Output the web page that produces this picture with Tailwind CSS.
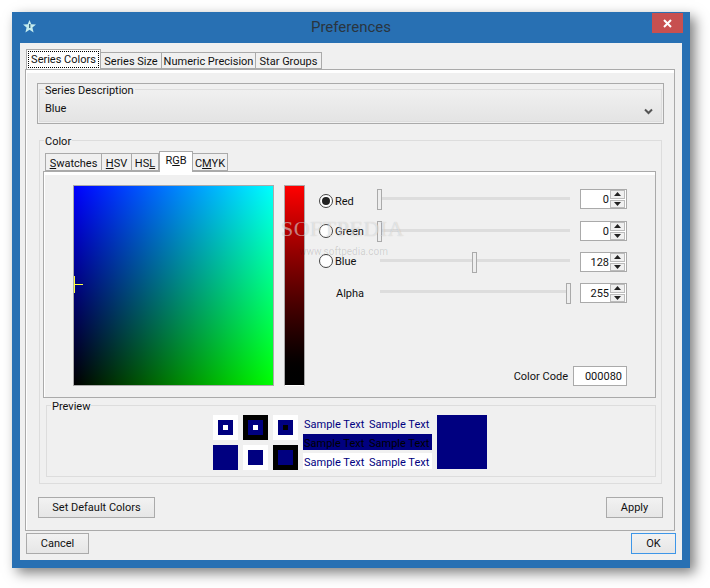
<!DOCTYPE html>
<html lang="en">
<head>
  <meta charset="utf-8">
  <title>Preferences</title>
  <script src="https://cdn.jsdelivr.net/npm/@tailwindcss/browser@4"></script>
</head>
<body class="bg-white h-[588px] pt-[12px] font-['Roboto',sans-serif] text-[11px] leading-none text-[#111] whitespace-nowrap">
  <!-- window -->
  <div class="relative ml-[12px] w-[678px] h-[556px] bg-[#2870b3] shadow-[5px_5px_12px_rgba(0,0,0,0.5)] flex flex-col">
    <!-- title bar -->
    <div class="relative h-[31px] flex items-center justify-center text-[15px] text-[#2a3540]">
      <svg class="absolute left-[10px] top-[7px] w-[15px] h-[15px]" viewBox="0 0 15 15"><path d="M7.5 1 9.3 5.3 14 5.6 10.4 8.6 11.6 13.4 7.5 10.8 3.4 13.4 4.6 8.6 1 5.6 5.7 5.3Z" fill="#c5ecee"/><path d="M7 5h1.4v4H7z" fill="#3b6d86"/></svg>
      <span>Preferences</span>
      <div class="absolute right-[7px] top-[1px] w-[31px] h-[20px] bg-[#c75050] flex items-center justify-center">
        <svg class="w-[9px] h-[9px]" viewBox="0 0 9 9"><path d="M1 1 8 8M8 1 1 8" stroke="#fff" stroke-width="2"/></svg>
      </div>
    </div>

    <!-- client -->
    <div class="mx-[8px] h-[517px] bg-[#f0f0f0] px-[5px] pt-[6px]">
      <!-- top tabs -->
      <div class="flex items-end h-[20px] pl-[1px]">
        <div class="relative z-10 -mb-[1px] h-[21px] w-[75px] bg-white border border-[#aaa] flex items-center justify-center"><span class="border border-dotted border-black h-[17px] w-[71px] flex items-center justify-center">Series Colors</span></div>
        <div class="h-[17px] w-[61px] bg-[#f0f0f0] border border-[#aaa] border-l-0 flex items-center justify-center"><span class="mt-[2px]">Series Size</span></div>
        <div class="h-[17px] w-[94px] bg-[#f0f0f0] border border-[#aaa] border-l-0 flex items-center justify-center"><span class="mt-[2px]">Numeric Precision</span></div>
        <div class="h-[17px] w-[66px] bg-[#f0f0f0] border border-[#aaa] border-l-0 flex items-center justify-center"><span class="mt-[2px]">Star Groups</span></div>
      </div>
      <!-- main pane -->
      <div class="h-[462px] w-[650px] border border-[#aaa] shadow-[inset_1px_3px_0_#fff] relative">
        <!-- series description -->
        <div class="relative ml-[11px] mt-[13px] w-[627px] h-[41px] border border-[#aaa] px-[1px] pt-[5px] pb-[1px]">
          <div class="h-[33px] border border-[#ddd] bg-gradient-to-b from-[#f0f0f0] to-[#e4e4e4] flex items-end justify-between pl-[5px] pr-[8px] pb-[7px]">
            <span>Blue</span>
            <svg class="w-[9px] h-[7px] mb-[-1px]" viewBox="0 0 9 7"><path d="M1 1.5 4.5 5 8 1.5" fill="none" stroke="#555" stroke-width="2"/></svg>
          </div>
          <span class="absolute left-[6px] top-[1px] bg-[#f0f0f0] px-[1px] h-[12px]">Series Description</span>
        </div>

        <!-- color group -->
        <div class="relative ml-[13px] mt-[16px] w-[623px] h-[344px] border border-[#ddd]">
          <span class="absolute left-[4px] top-[-5px] bg-[#f0f0f0] px-[1px] h-[13px]">Color</span>
          <div class="flex items-end h-[20px] mt-[10px] ml-[5px]">
            <div class="h-[18px] w-[57px] border border-[#aaa] flex items-center justify-center"><span class="mt-[3px]"><u>S</u>watches</span></div>
            <div class="h-[18px] w-[30px] border border-[#aaa] border-l-0 flex items-center justify-center"><span class="mt-[3px]"><u>H</u>SV</span></div>
            <div class="h-[18px] w-[27px] border border-[#aaa] border-l-0 flex items-center justify-center"><span class="mt-[3px]">HS<u>L</u></span></div>
            <div class="relative z-10 -mb-[1px] h-[21px] w-[34px] bg-white border border-[#aaa] border-b-0 flex items-center justify-center"><span class="mt-[-3px]">R<u>G</u>B</span></div>
            <div class="h-[18px] w-[35px] border border-[#aaa] border-l-0 flex items-center justify-center"><span class="mt-[3px]">C<u>M</u>YK</span></div>
          </div>
          <!-- rgb pane -->
          <div class="relative ml-[3px] w-[613px] h-[227px] border border-[#aaa] shadow-[inset_1px_3px_0_#fff] flex items-start pl-[29px] pt-[13px]">
            <div class="relative w-[201px] h-[201px] border border-[#aaa] bg-[linear-gradient(to_right,#000,#0f0),linear-gradient(to_bottom,#00f,#000)] bg-blend-screen">
              <div class="absolute left-0 top-[90px] w-[1px] h-[17px] bg-[#ffff40]"></div>
              <div class="absolute left-[1px] top-[98px] w-[8px] h-[1px] bg-[#ffff40]"></div>
            </div>
            <div class="ml-[10px] w-[21px] h-[201px] border border-[#aaa] border-b-white bg-gradient-to-b from-[#ff0000] to-black"></div>
            <!-- sliders -->
            <div class="ml-[13px] w-[309px] pt-[4px] flex flex-col">
              <div class="flex items-center h-[20px]">
                <div class="w-[14px] h-[14px] rounded-full border border-[#444] bg-white flex items-center justify-center mt-[4px] ml-[1px]"><div class="w-[8px] h-[8px] rounded-full bg-[#222]"></div></div>
                <span class="ml-[2px] w-[42px] mt-[4px]">Red</span>
                <div class="relative w-[193px] h-[20px]"><div class="absolute left-[3px] right-0 top-[8px] h-[3px] bg-[#ddd]"></div><div class="absolute left-0 top-0 w-[5px] h-[21px] bg-[#eee] border border-[#aaa]"></div></div>
                <div class="ml-[10px] w-[47px] h-[20px] border border-[#aaa] bg-white flex items-center"><span class="w-[28px] text-right">0</span><div class="ml-[1px] w-[15px] h-[18px] flex flex-col gap-[1px]"><div class="h-[8.5px] bg-[#f0f0f0] border border-[#bbb] flex items-center justify-center"><svg class="w-[7px] h-[4px]" viewBox="0 0 7 4"><path d="M3.5 0 7 4H0Z" fill="#222"/></svg></div><div class="h-[8.5px] bg-[#f0f0f0] border border-[#bbb] flex items-center justify-center"><svg class="w-[7px] h-[4px]" viewBox="0 0 7 4"><path d="M0 0H7L3.5 4Z" fill="#222"/></svg></div></div></div>
              </div>
              <div class="flex items-center h-[20px] mt-[12px]">
                <div class="w-[14px] h-[14px] rounded-full border border-[#444] bg-white ml-[1px] mt-[-1px]"></div>
                <span class="ml-[2px] w-[42px]">Green</span>
                <div class="relative w-[193px] h-[20px]"><div class="absolute left-[3px] right-0 top-[8px] h-[3px] bg-[#ddd]"></div><div class="absolute left-0 top-0 w-[5px] h-[21px] bg-[#eee] border border-[#aaa]"></div></div>
                <div class="ml-[10px] w-[47px] h-[20px] border border-[#aaa] bg-white flex items-center"><span class="w-[28px] text-right">0</span><div class="ml-[1px] w-[15px] h-[18px] flex flex-col gap-[1px]"><div class="h-[8.5px] bg-[#f0f0f0] border border-[#bbb] flex items-center justify-center"><svg class="w-[7px] h-[4px]" viewBox="0 0 7 4"><path d="M3.5 0 7 4H0Z" fill="#222"/></svg></div><div class="h-[8.5px] bg-[#f0f0f0] border border-[#bbb] flex items-center justify-center"><svg class="w-[7px] h-[4px]" viewBox="0 0 7 4"><path d="M0 0H7L3.5 4Z" fill="#222"/></svg></div></div></div>
              </div>
              <div class="flex items-center h-[20px] mt-[11px]">
                <div class="w-[14px] h-[14px] rounded-full border border-[#444] bg-white ml-[1px] mt-[-2px]"></div>
                <span class="ml-[2px] w-[42px] mt-[-2px]">Blue</span>
                <div class="relative w-[193px] h-[20px]"><div class="absolute left-[3px] right-0 top-[7px] h-[3px] bg-[#ddd]"></div><div class="absolute left-[95px] top-0 w-[5px] h-[21px] bg-[#eee] border border-[#aaa]"></div></div>
                <div class="ml-[10px] w-[47px] h-[20px] border border-[#aaa] bg-white flex items-center"><span class="w-[28px] text-right">128</span><div class="ml-[1px] w-[15px] h-[18px] flex flex-col gap-[1px]"><div class="h-[8.5px] bg-[#f0f0f0] border border-[#bbb] flex items-center justify-center"><svg class="w-[7px] h-[4px]" viewBox="0 0 7 4"><path d="M3.5 0 7 4H0Z" fill="#222"/></svg></div><div class="h-[8.5px] bg-[#f0f0f0] border border-[#bbb] flex items-center justify-center"><svg class="w-[7px] h-[4px]" viewBox="0 0 7 4"><path d="M0 0H7L3.5 4Z" fill="#222"/></svg></div></div></div>
              </div>
              <div class="flex items-center h-[20px] mt-[11px]">
                <span class="ml-[18px] w-[41px]">Alpha</span>
                <div class="relative w-[193px] h-[20px]"><div class="absolute left-[3px] right-0 top-[7px] h-[3px] bg-[#ddd]"></div><div class="absolute left-[189px] top-0 w-[5px] h-[21px] bg-[#eee] border border-[#aaa]"></div></div>
                <div class="ml-[10px] w-[47px] h-[20px] border border-[#aaa] bg-white flex items-center"><span class="w-[28px] text-right">255</span><div class="ml-[1px] w-[15px] h-[18px] flex flex-col gap-[1px]"><div class="h-[8.5px] bg-[#f0f0f0] border border-[#bbb] flex items-center justify-center"><svg class="w-[7px] h-[4px]" viewBox="0 0 7 4"><path d="M3.5 0 7 4H0Z" fill="#222"/></svg></div><div class="h-[8.5px] bg-[#f0f0f0] border border-[#bbb] flex items-center justify-center"><svg class="w-[7px] h-[4px]" viewBox="0 0 7 4"><path d="M0 0H7L3.5 4Z" fill="#222"/></svg></div></div></div>
              </div>
              <div class="flex items-center justify-end h-[20px] mt-[63px]">
                <span class="mr-[5px]">Color Code</span>
                <div class="w-[54px] h-[20px] border border-[#aaa] bg-white flex items-center justify-end pr-[4px]">000080</div>
              </div>
            </div>
          </div>
          <!-- preview -->
          <div class="relative ml-[6px] mt-[7px] w-[610px] h-[72px] border border-[#ddd] flex items-start pl-[166px] pt-[9px]">
            <span class="absolute left-[4px] top-[-5px] bg-[#f0f0f0] px-[1px] h-[13px]">Preview</span>
            <div class="grid grid-cols-[25px_25px_25px] grid-rows-[25px_25px] gap-[5px]">
              <div class="bg-white flex items-center justify-center"><div class="w-[15px] h-[15px] bg-[#000080] flex items-center justify-center"><div class="w-[5px] h-[5px] bg-white"></div></div></div>
              <div class="bg-black flex items-center justify-center"><div class="w-[15px] h-[15px] bg-[#000080] flex items-center justify-center"><div class="w-[5px] h-[5px] bg-white"></div></div></div>
              <div class="bg-white flex items-center justify-center"><div class="w-[15px] h-[15px] bg-[#000080] flex items-center justify-center"><div class="w-[5px] h-[5px] bg-black"></div></div></div>
              <div class="bg-[#000080]"></div>
              <div class="bg-white flex items-center justify-center"><div class="w-[15px] h-[15px] bg-[#000080]"></div></div>
              <div class="bg-black flex items-center justify-center"><div class="w-[15px] h-[15px] bg-[#000080]"></div></div>
            </div>
            <div class="ml-[5px] w-[129px] flex flex-col">
              <div class="h-[16px] mt-[1px] flex items-center gap-[5px] px-[1px] text-[#000080]"><span class="w-[60px]">Sample Text</span><span>Sample Text</span></div>
              <div class="h-[16px] mt-[2px] bg-[#000080] flex items-center gap-[5px] px-[1px] text-black"><span class="w-[60px] mt-[2px]">Sample Text</span><span class="mt-[2px]">Sample Text</span></div>
              <div class="h-[16px] mt-[3px] bg-white flex items-center gap-[5px] px-[1px] text-[#000080]"><span class="w-[60px] mt-[2px]">Sample Text</span><span class="mt-[2px]">Sample Text</span></div>
            </div>
            <div class="ml-[5px] w-[50px] h-[54px] bg-[#000080]"></div>
          </div>
        </div>

        <!-- apply row -->
        <div class="flex justify-between ml-[12px] mr-[11px] mt-[13px]">
          <div class="h-[21px] w-[117px] border border-[#aaa] bg-gradient-to-b from-[#f2f2f2] to-[#e6e6e6] flex items-center justify-center">Set Default Colors</div>
          <div class="h-[21px] w-[57px] border border-[#aaa] bg-gradient-to-b from-[#f2f2f2] to-[#e6e6e6] flex items-center justify-center">Apply</div>
        </div>
      </div>

      <!-- dialog buttons -->
      <div class="flex justify-between mt-[2px] pl-[1px] pr-[1px]">
        <div class="h-[21px] w-[63px] border border-[#aaa] bg-gradient-to-b from-[#f2f2f2] to-[#e6e6e6] flex items-center justify-center">Cancel</div>
        <div class="h-[21px] w-[45px] border border-[#3d96e8] bg-gradient-to-b from-[#f2f2f2] to-[#e6e6e6] flex items-center justify-center">OK</div>
      </div>
    </div>

    <!-- watermark over the dialog -->
    <div class="absolute left-[269px] top-[206px] text-[22px] tracking-[0.5px] text-white/50 [text-shadow:0_0_1px_rgba(0,0,0,0.2)] font-['Liberation_Serif',serif]">SOFTPEDIA</div>
    <div class="absolute left-[287px] top-[235px] text-[10px] text-black/15">www.softpedia.com</div>
  </div>
</body>
</html>
